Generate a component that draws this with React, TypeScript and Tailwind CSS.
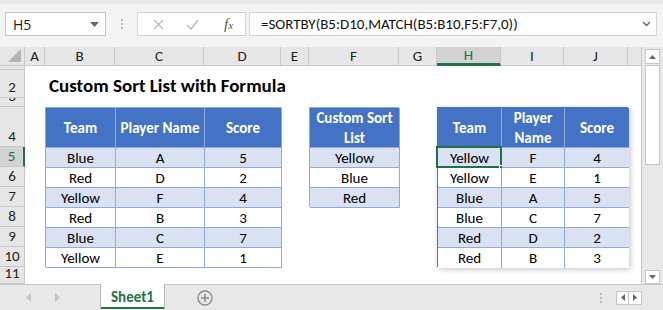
import React from "react";

const F = { fontFamily: "Carlito, Lato, 'Liberation Sans', sans-serif" };
const UI = { fontFamily: "'Open Sans', 'Noto Sans', sans-serif" };

const letters = ["A", "B", "C", "D", "E", "F", "G", "H", "I", "J", ""];

function HeaderCell({ children, cls = "" }: { children: React.ReactNode; cls?: string }) {
  return (
    <div className={"flex items-center justify-center text-center leading-[20px] bg-[#4472c4] text-white font-bold text-[15px] border-r border-b border-[#8ea9db] " + cls}>
      {children}
    </div>
  );
}

function DataCell({ children, band, cls = "" }: { children: React.ReactNode; band: boolean; cls?: string }) {
  return (
    <div className={"relative flex items-center justify-center pt-[1px] text-[15px] text-black border-r border-b border-[#8ea9db] " + (band ? "bg-[#d9e1f2] " : "bg-white ") + cls}>
      {children}
    </div>
  );
}

export default function App() {
  const t1 = [
    ["Blue", "A", "5"],
    ["Red", "D", "2"],
    ["Yellow", "F", "4"],
    ["Red", "B", "3"],
    ["Blue", "C", "7"],
    ["Yellow", "E", "1"],
  ];
  const t3 = [
    ["Yellow", "F", "4"],
    ["Yellow", "E", "1"],
    ["Blue", "A", "5"],
    ["Blue", "C", "7"],
    ["Red", "D", "2"],
    ["Red", "B", "3"],
  ];
  const rowLabels = ["1", "2", "3", "4", "5", "6", "7", "8", "9", "10", "11"];
  const rowStarts = [
    "row-start-2",
    "row-start-3",
    "row-start-4",
    "row-start-5",
    "row-start-6",
    "row-start-7",
    "row-start-8",
    "row-start-9",
    "row-start-10",
    "row-start-11",
    "row-start-12",
  ];

  return (
    <div className="w-[663px] h-[310px] overflow-hidden bg-white flex flex-col text-[#222]" style={F}>
      {/* Formula bar */}
      <div className="h-[47px] bg-[#f3f3f3] border-t-[4px] border-[#e8e8e8] flex items-start pt-[8px] pl-[5px] shrink-0">
        <div className="w-[101px] h-[24px] bg-white border border-[#c6c6c6] flex items-center justify-between pl-[7px] pr-[6px] text-[15px] text-[#222]" style={UI}>
          <span className="text-[14px]">H5</span>
          <svg width="9" height="5" viewBox="0 0 9 5"><path d="M0 0h9L4.5 5z" fill="#666" /></svg>
        </div>
        <div className="w-[31px] h-[24px] flex flex-col items-center justify-center gap-[2px]">
          <span className="w-[2px] h-[2px] bg-[#bbb]" />
          <span className="w-[2px] h-[2px] bg-[#bbb]" />
          <span className="w-[2px] h-[2px] bg-[#bbb]" />
        </div>
        <div className="w-[109px] h-[24px] bg-white border border-[#d4d4d4] flex items-center">
          <svg className="ml-[15px]" width="11" height="11" viewBox="0 0 11 11"><path d="M1 1l9 9M10 1l-9 9" stroke="#b8b8b8" strokeWidth="1.3" /></svg>
          <svg className="ml-[22px]" width="13" height="11" viewBox="0 0 13 11"><path d="M1 6l4 4 7-9" stroke="#b8b8b8" strokeWidth="1.4" fill="none" /></svg>
          <span className="ml-[25px] text-[15px] italic text-[#555]" style={{ fontFamily: "'Liberation Serif', serif" }}>
            f<span className="text-[11px]">x</span>
          </span>
        </div>
        <div className="ml-[3px] w-[408px] h-[24px] bg-white border border-[#d4d4d4] flex items-center justify-between pl-[11px] pr-[5px]">
          <span className="text-[15px] text-[#111]">=SORTBY(B5:D10,MATCH(B5:B10,F5:F7,0))</span>
          <svg width="9" height="6" viewBox="0 0 9 6"><path d="M1 1l3.5 3.5L8 1" stroke="#666" strokeWidth="1.4" fill="none" /></svg>
        </div>
      </div>

      {/* Sheet area */}
      <div className="flex h-[237px] shrink-0">
        <div className="w-[642px] border-r border-[#c8c8c8] grid grid-cols-[25px_20px_70px_89px_77px_28px_90px_38px_64px_63px_64px_1fr] grid-rows-[19px_4px_28px_9px_40px_20px_20px_20px_20px_20px_20px_17px] overflow-hidden">
          {/* corner */}
          <div className="row-start-1 col-start-1 bg-[#e6e6e6] border-r border-b border-[#c8c8c8] flex items-end justify-end pr-[3px] pb-[3px]">
            <svg width="13" height="13" viewBox="0 0 13 13"><path d="M13 0v13H0z" fill="#b4b4b4" /></svg>
          </div>
          {letters.map((l, i) => (
            <div
              key={"c" + i}
              className={
                "row-start-1 flex items-center justify-center text-[15px] border-b " +
                (l === "H"
                  ? "bg-[#d2d2d2] text-[#217346] border-b-[3px] border-[#217346] border-r border-r-[#c8c8c8]"
                  : "bg-[#e6e6e6] text-[#222] border-[#c8c8c8] " + (l ? "border-r" : ""))
              }
            >
              {l}
            </div>
          ))}
          {/* row headers */}
          {rowLabels.map((r, i) => (
            <div
              key={"r" + r}
              className={
                "col-start-1 overflow-hidden flex items-end justify-center text-[15px] leading-[19px] border-b border-[#c8c8c8] " +
                rowStarts[i] +
                " " +
                (r === "5" ? "bg-[#d2d2d2] text-[#217346] border-r-[2px] border-r-[#217346]" : "bg-[#e6e6e6] border-r border-r-[#c8c8c8]")
              }
            >
              {r}
            </div>
          ))}

          {/* Title */}
          <div className="row-start-3 col-start-3 col-span-5 flex items-end pl-[4px] whitespace-nowrap">
            <span className="text-[19px] font-bold text-black leading-[24px]">Custom Sort List with Formula</span>
          </div>

          {/* Table 1 */}
          <div className="row-start-5 row-span-7 col-start-3 col-span-3 grid grid-cols-[70px_89px_77px] grid-rows-[40px_20px_20px_20px_20px_20px_20px] border-l border-t border-[#8ea9db]">
            <HeaderCell>Team</HeaderCell>
            <HeaderCell>Player Name</HeaderCell>
            <HeaderCell>Score</HeaderCell>
            {t1.map((row, ri) =>
              row.map((c, ci) => (
                <DataCell key={ri + "-" + ci} band={ri % 2 === 0}>
                  {c}
                </DataCell>
              ))
            )}
          </div>

          {/* Table 2 */}
          <div className="row-start-5 row-span-4 col-start-7 grid grid-cols-[90px] grid-rows-[40px_20px_20px_20px] border-l border-t border-[#8ea9db]">
            <HeaderCell>
              Custom Sort
              <br />
              List
            </HeaderCell>
            {["Yellow", "Blue", "Red"].map((c, i) => (
              <DataCell key={c} band={i % 2 === 0}>
                {c}
              </DataCell>
            ))}
          </div>

          {/* Table 3 */}
          <div className="row-start-5 row-span-7 col-start-9 col-span-3 shadow-[2px_2px_6px_rgba(0,0,0,0.25)]">
            <div className="grid grid-cols-[64px_63px_64px] grid-rows-[40px_20px_20px_20px_20px_20px_20px] border border-[#4472c4] h-full">
              <HeaderCell>Team</HeaderCell>
              <HeaderCell>
                Player
                <br />
                Name
              </HeaderCell>
              <HeaderCell cls="border-r-0">Score</HeaderCell>
              {t3.map((row, ri) =>
                row.map((c, ci) => (
                  <DataCell
                    key={ri + "-" + ci}
                    band={ri % 2 === 0}
                    cls={(ci === 2 ? "border-r-0 " : "") + (ri === 5 ? "border-b-0 " : "")}
                  >
                    {c}
                    {ri === 0 && ci === 0 && (
                      <>
                        <span className="absolute -left-[2px] -top-[2px] -right-[1px] -bottom-[1px] border-2 border-[#217346]" />
                        <span className="absolute -right-[4px] -bottom-[4px] w-[6px] h-[6px] bg-[#217346] border border-white" />
                      </>
                    )}
                  </DataCell>
                ))
              )}
            </div>
          </div>
        </div>

        {/* vertical scrollbar */}
        <div className="flex-1 bg-[#e8e8e8] flex flex-col items-center pt-[2px]">
          <div className="w-[15px] h-[15px] bg-white border border-[#c6c6c6] flex items-center justify-center">
            <svg width="7" height="4" viewBox="0 0 7 4"><path d="M0 4h7L3.5 0z" fill="#666" /></svg>
          </div>
          <div className="w-[15px] h-[100px] mt-[1px] bg-white border border-[#c6c6c6]" />
          <div className="flex-1" />
          <div className="w-[15px] h-[14px] bg-white border border-[#c6c6c6] flex items-center justify-center">
            <svg width="7" height="4" viewBox="0 0 7 4"><path d="M0 0h7L3.5 4z" fill="#666" /></svg>
          </div>
        </div>
      </div>

      {/* Tab bar */}
      <div className="flex-1 bg-[#e8e8e8] border-t border-[#c6c6c6] flex items-stretch">
        <div className="w-[100px] flex items-center">
          <svg className="ml-[26px]" width="5" height="9" viewBox="0 0 5 9"><path d="M5 0v9L0 4.5z" fill="#c4c4c4" /></svg>
          <svg className="ml-[24px]" width="5" height="9" viewBox="0 0 5 9"><path d="M0 0v9l5-4.5z" fill="#c4c4c4" /></svg>
        </div>
        <div className="w-[65px] -mt-[1px] bg-white border-x border-[#b8b8b8] flex items-center justify-center relative">
          <span className="text-[15px] font-bold text-[#217346]">Sheet1</span>
          <span className="absolute left-0 right-0 bottom-[1px] h-[2px] bg-[#217346]" />
        </div>
        <div className="w-[80px] flex items-center justify-center">
          <svg width="16" height="16" viewBox="0 0 16 16">
            <circle cx="8" cy="8" r="7" stroke="#8a8a8a" strokeWidth="1.3" fill="none" />
            <path d="M8 4v8M4 8h8" stroke="#8a8a8a" strokeWidth="1.5" />
          </svg>
        </div>
        <div className="flex-1" />
        <div className="flex items-center mr-[21px]">
          <div className="flex flex-col gap-[2px] mr-[14px]">
            <span className="w-[2px] h-[2px] bg-[#bbb]" />
            <span className="w-[2px] h-[2px] bg-[#bbb]" />
            <span className="w-[2px] h-[2px] bg-[#bbb]" />
          </div>
          <div className="h-[14px] flex border border-[#c6c6c6] bg-white">
            <div className="w-[12px] flex items-center justify-center border-r border-[#c6c6c6]">
              <svg width="4" height="7" viewBox="0 0 4 7"><path d="M4 0v7L0 3.5z" fill="#666" /></svg>
            </div>
            <div className="w-[12px] flex items-center justify-center">
              <svg width="4" height="7" viewBox="0 0 4 7"><path d="M0 0v7l4-3.5z" fill="#666" /></svg>
            </div>
          </div>
        </div>
      </div>
    </div>
  );
}
